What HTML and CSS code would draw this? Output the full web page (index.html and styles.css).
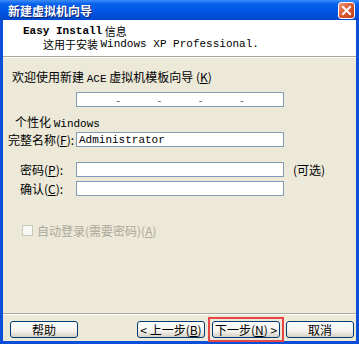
FILE: index.html
```html
<!DOCTYPE html>
<html lang="zh">
<head>
    <meta charset="UTF-8">
    <title>新建虚拟机向导</title>
    <link rel="stylesheet" href="styles.css">
</head>
<body>
    <div class="window">
        <div class="titlebar">
            <span class="title-text">新建虚拟机向导</span>
            <span class="close-btn">
                <svg width="11" height="11" viewBox="0 0 11 11"><path d="M2 2 L9 9 M9 2 L2 9" stroke="#fff" stroke-width="2" stroke-linecap="square"/></svg>
            </span>
        </div>
        <div class="header">
            <div class="head-title"><span class="mono">Easy Install</span> 信息</div>
            <div class="head-sub">这用于安装 <span class="mono-thin">Windows XP Professional.</span></div>
        </div>
        <div class="content">
            <div class="welcome">欢迎使用新建 <span class="mono-thin">ACE</span> 虚拟机模板向导 (<u>K</u>)</div>
            <div class="key-row">
                <div class="field key-field">
                    <span class="seg"></span><span class="dash">-</span>
                    <span class="seg"></span><span class="dash">-</span>
                    <span class="seg"></span><span class="dash">-</span>
                    <span class="seg"></span><span class="dash">-</span>
                    <span class="seg"></span>
                </div>
            </div>
            <div class="section">个性化 <span class="mono-thin">Windows</span></div>
            <div class="row row-name">
                <label class="lbl lbl-name">完整名称(<u>F</u>):</label>
                <div class="field"><span class="mono-thin">Administrator</span></div>
            </div>
            <div class="row row-pass">
                <label class="lbl lbl-pass">密码(<u>P</u>):</label>
                <div class="field"></div>
                <span class="optional">(可选)</span>
            </div>
            <div class="row row-confirm">
                <label class="lbl lbl-pass">确认(<u>C</u>):</label>
                <div class="field"></div>
            </div>
            <div class="check-row">
                <span class="checkbox"></span>
                <span class="check-label">自动登录(需要密码)(<u>A</u>)</span>
            </div>
        </div>
        <div class="footer">
            <button class="btn btn-help">帮助</button>
            <div class="nav">
                <button class="btn">&lt; 上一步(<u>B</u>)</button>
                <span class="highlight">
                    <button class="btn">下一步(<u>N</u>) &gt;</button>
                </span>
                <button class="btn">取消</button>
            </div>
        </div>
    </div>
</body>
</html>
```

FILE: styles.css
```css
body{
    margin: 0;
    padding: 0;
    background-color: #ECE9D8;
    font-family: "Noto Sans CJK SC", "DejaVu Sans", sans-serif;
    font-size: 12px;
    color: #000;
}
u{
    text-decoration: underline;
}
.mono{
    font-family: "Liberation Mono", "Noto Sans CJK SC", monospace;
    font-weight: bold;
    font-size: 11px;
}
.mono-thin{
    font-family: "Liberation Mono", monospace;
    font-size: 11px;
}
.window{
    width: 359px;
    height: 344px;
    display: flex;
    flex-direction: column;
    box-sizing: border-box;
    border: 3px solid #0B4FD8;
    border-top: none;
    background-color: #ECE9D8;
}
.titlebar{
    height: 20px;
    margin: 0 -3px;
    background: linear-gradient(#3C8CF8 0%, #0760EC 20%, #0054E3 60%, #0048CC 100%);
    display: flex;
    align-items: center;
    justify-content: space-between;
    padding: 0 4px 0 8px;
    flex-shrink: 0;
}
.title-text{
    color: #fff;
    font-weight: bold;
    font-size: 12px;
    text-shadow: 1px 1px #0A1E6E;
}
.close-btn{
    width: 15px;
    height: 15px;
    border: 1px solid #fff;
    border-radius: 3px;
    background: linear-gradient(135deg, #EE9878 0%, #D9572F 50%, #C2401A 100%);
    display: flex;
    align-items: center;
    justify-content: center;
}
.header{
    height: 37px;
    background-color: #fff;
    padding: 5px 0 0 20px;
    box-sizing: border-box;
    border-bottom: 1px solid #ACA899;
    box-shadow: 0 1px #fff;
    flex-shrink: 0;
    font-size: 11px;
}
.head-title,
.head-sub{
    height: 13px;
    line-height: 13px;
    white-space: nowrap;
}
.head-sub{
    padding-left: 20px;
}
.head-title span,
.head-sub span{
    line-height: 13px;
    vertical-align: top;
}
.content{
    flex: 1;
    padding: 13px 0 0 9px;
    box-sizing: border-box;
}
.welcome{
    height: 14px;
    line-height: 14px;
}
.key-row{
    margin-top: 8px;
    padding-left: 64px;
}
.field{
    width: 208px;
    height: 15px;
    box-sizing: border-box;
    background-color: #fff;
    border: 1px solid #7F9DB9;
    display: flex;
    align-items: center;
    padding-left: 2px;
}
.key-field{
    padding-left: 0;
}
.seg{
    flex: 1;
}
.dash{
    width: 0;
    display: flex;
    justify-content: center;
    color: #555;
    font-size: 11px;
}
.section{
    margin-top: 8px;
    height: 14px;
    line-height: 14px;
    padding-left: 3px;
}
.row{
    display: flex;
    align-items: center;
    height: 15px;
    margin-left: -4px;
}
.row-name{
    margin-top: 3px;
}
.row-pass{
    margin-top: 15px;
}
.row-confirm{
    margin-top: 4px;
}
.lbl{
    width: 68px;
    box-sizing: border-box;
    flex-shrink: 0;
    white-space: nowrap;
}
.lbl-pass{
    padding-left: 12px;
}
.optional{
    margin-left: 9px;
}
.check-row{
    margin-top: 28px;
    padding-left: 10px;
    display: flex;
    align-items: center;
    height: 12px;
    gap: 4px;
}
.checkbox{
    width: 11px;
    height: 11px;
    box-sizing: border-box;
    border: 1px solid #CAC8BB;
    background-color: #F7F7F4;
}
.check-label{
    color: #ACA899;
}
.footer{
    height: 28px;
    box-sizing: border-box;
    border-top: 1px solid #ACA899;
    box-shadow: inset 0 1px #fff;
    padding: 7px 2px 0 7px;
    display: flex;
    justify-content: space-between;
    align-items: flex-start;
    flex-shrink: 0;
}
.nav{
    display: flex;
    gap: 6px;
}
.btn{
    width: 68px;
    height: 17px;
    padding: 0;
    border: 1px solid #003C74;
    border-radius: 3px;
    background: linear-gradient(#FFFFFF 0%, #F4F3EE 60%, #D6D0C5 100%);
    font-family: "Noto Sans CJK SC", sans-serif;
    font-size: 12px;
    line-height: 14px;
    color: #000;
}
.highlight{
    display: flex;
    border: 2px solid #E8474A;
    padding: 2px;
    margin: -4px -4px -4px -3px;
}
```
